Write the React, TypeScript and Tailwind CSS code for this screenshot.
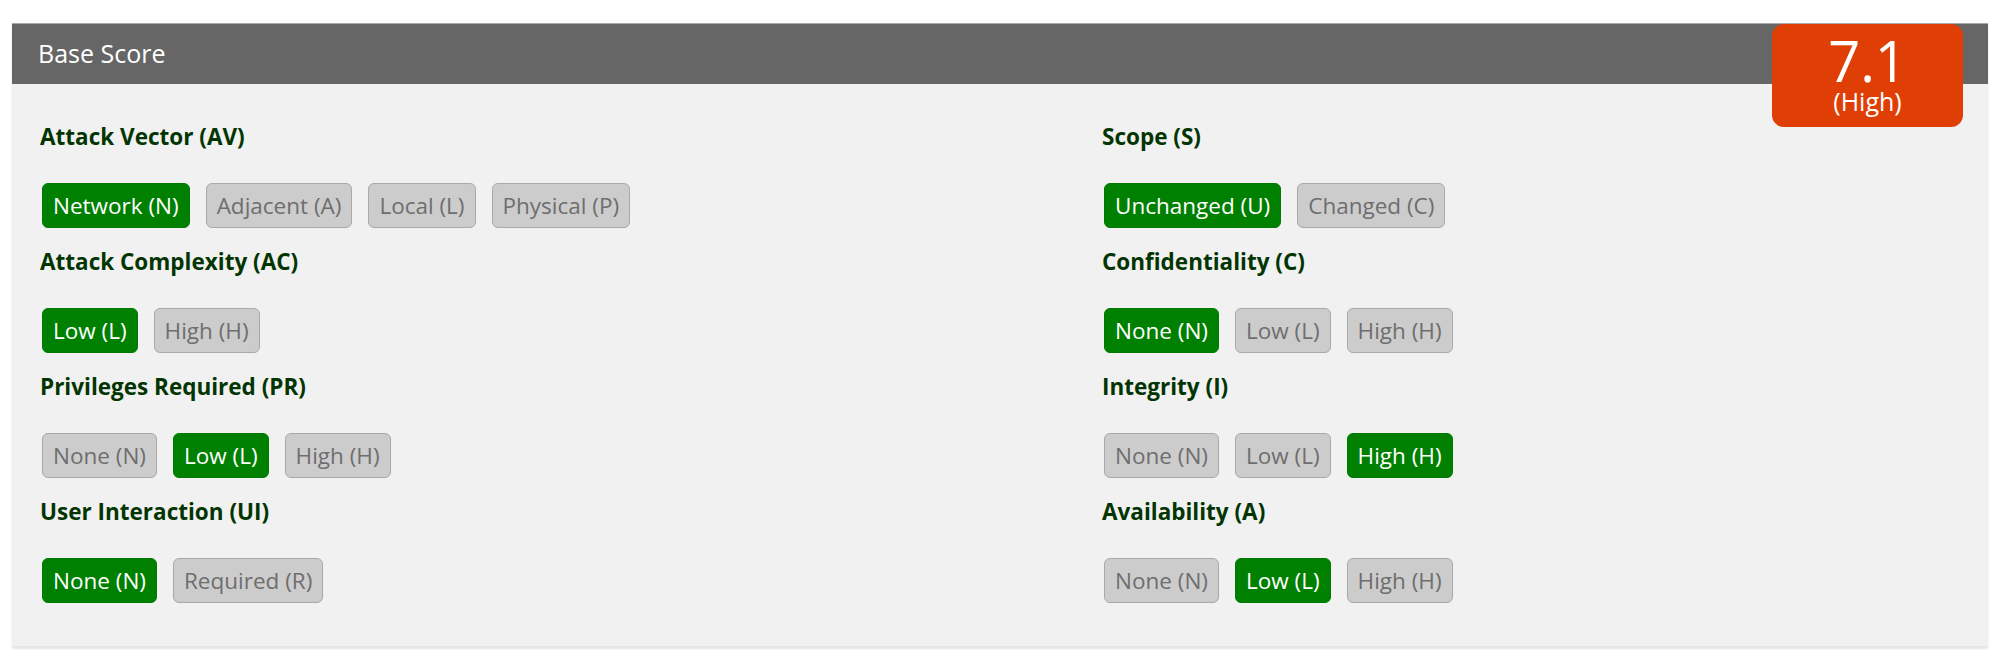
type Metric = {
  title: string;
  options: string[];
  selected: number;
};

const left: Metric[] = [
  { title: "Attack Vector (AV)", options: ["Network (N)", "Adjacent (A)", "Local (L)", "Physical (P)"], selected: 0 },
  { title: "Attack Complexity (AC)", options: ["Low (L)", "High (H)"], selected: 0 },
  { title: "Privileges Required (PR)", options: ["None (N)", "Low (L)", "High (H)"], selected: 1 },
  { title: "User Interaction (UI)", options: ["None (N)", "Required (R)"], selected: 0 },
];

const right: Metric[] = [
  { title: "Scope (S)", options: ["Unchanged (U)", "Changed (C)"], selected: 0 },
  { title: "Confidentiality (C)", options: ["None (N)", "Low (L)", "High (H)"], selected: 0 },
  { title: "Integrity (I)", options: ["None (N)", "Low (L)", "High (H)"], selected: 2 },
  { title: "Availability (A)", options: ["None (N)", "Low (L)", "High (H)"], selected: 1 },
];

function MetricGroup({ m }: { m: Metric }) {
  return (
    <div>
      <h3 className="text-[22.5px] leading-[32px] font-bold text-[#033503]">{m.title}</h3>
      <div className="mt-[30px] pl-[2px] flex gap-[16px]">
        {m.options.map((o, i) =>
          i === m.selected ? (
            <span
              key={o}
              className="h-[45px] px-[10px] flex items-center rounded-[6px] border border-[#007a00] bg-[#008000] text-white text-[22.5px]"
            >
              {o}
            </span>
          ) : (
            <span
              key={o}
              className="h-[45px] px-[10px] flex items-center rounded-[6px] border border-[#a9a9a9] bg-[#cccccc] text-[#6e6e6e] text-[22.5px]"
            >
              {o}
            </span>
          )
        )}
      </div>
    </div>
  );
}

export default function App() {
  return (
    <div className="bg-white w-[1999px] h-[669px] pt-[23px] px-[12px] font-['Open_Sans',sans-serif]">
      <div className="relative w-[1976px] bg-[#f1f1f1] shadow-[0_3px_2px_0_rgba(0,0,0,0.1)]">
        {/* header */}
        <div className="h-[61px] bg-[#666666] border-t border-[#a8a8a8] flex items-center pl-[26px]">
          <span className="text-white text-[25px]">Base Score</span>
        </div>

        {/* score badge */}
        <div className="absolute top-[1px] right-[25px] w-[191px] h-[103px] rounded-[12px] bg-[#df3e04] text-white flex flex-col items-center pt-[11px]">
          <div className="text-[56px] leading-[50px]">7.1</div>
          <div className="text-[25px] leading-[25px] mt-[4px]">(High)</div>
        </div>

        {/* metrics */}
        <div className="grid grid-cols-[1062px_1fr] pt-[37px] pb-[43px] pl-[28px]">
          <div className="flex flex-col gap-[18px]">
            {left.map((m) => (
              <MetricGroup key={m.title} m={m} />
            ))}
          </div>
          <div className="flex flex-col gap-[18px]">
            {right.map((m) => (
              <MetricGroup key={m.title} m={m} />
            ))}
          </div>
        </div>
      </div>
    </div>
  );
}
